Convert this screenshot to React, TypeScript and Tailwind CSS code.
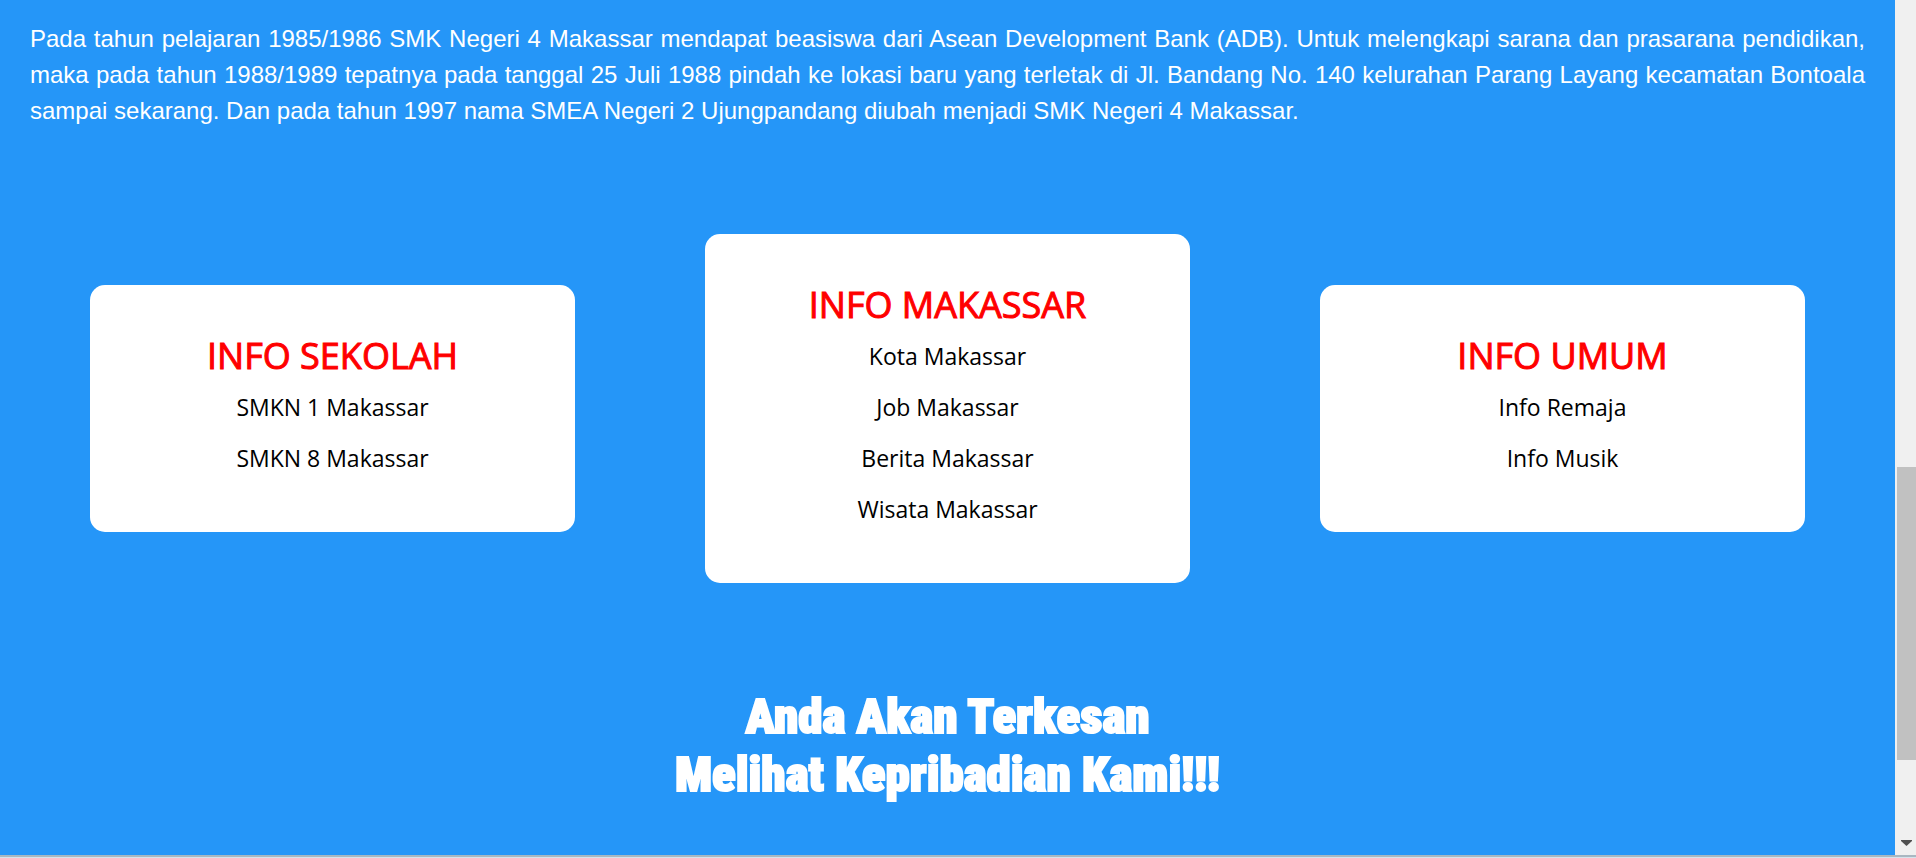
const cards = [
  { title: "INFO SEKOLAH", links: ["SMKN 1 Makassar", "SMKN 8 Makassar"] },
  { title: "INFO MAKASSAR", links: ["Kota Makassar", "Job Makassar", "Berita Makassar", "Wisata Makassar"] },
  { title: "INFO UMUM", links: ["Info Remaja", "Info Musik"] },
];

function InfoCard({ title, links }: { title: string; links: string[] }) {
  return (
    <section className="rounded-[15px] bg-white px-6 pt-[45px] pb-12 text-center">
      <h2 className="text-4xl/[52px] font-medium text-[#ff0000] [-webkit-text-stroke:1px_#ff0000]">{title}</h2>
      <ul>
        {links.map((link) => (
          <li key={link} className="text-[23px]/[51px] font-normal text-black">
            <a href="#">{link}</a>
          </li>
        ))}
      </ul>
    </section>
  );
}

function ScrollRail() {
  return (
    <div className="flex w-[21px] shrink-0 flex-col items-end bg-[#f0f0f0]" aria-hidden="true">
      <div className="grow-[467] basis-0" />
      <div className="w-[19px] grow-[293] basis-0 bg-[#c1c1c1]" />
      <div className="flex min-h-0 grow-[80] basis-[15px] flex-col items-center justify-end pr-1 pb-[9px]">
        <svg width="11" height="6" viewBox="0 0 11 6" fill="#505050">
          <path d="M0 0h11v1L5.500 6 0 1z" />
        </svg>
      </div>
    </div>
  );
}

export default function App() {
  return (
    <div className="flex min-h-screen flex-col bg-[#2596f8]">
      <div className="flex grow">
        <main className="min-w-0 grow font-['Open_Sans',sans-serif]">
          <p className="px-[30px] pt-[21px] text-justify font-['Liberation_Sans',Arial,sans-serif] text-2xl/9 text-white">
            Pada tahun pelajaran 1985/1986 SMK Negeri 4 Makassar mendapat beasiswa dari Asean Development Bank (ADB).
            Untuk melengkapi sarana dan prasarana pendidikan, maka pada tahun 1988/1989 tepatnya pada tanggal 25 Juli
            1988 pindah ke lokasi baru yang terletak di Jl. Bandang No. 140 kelurahan Parang Layang kecamatan Bontoala
            sampai sekarang. Dan pada tahun 1997 nama SMEA Negeri 2 Ujungpandang diubah menjadi SMK Negeri 4 Makassar.
          </p>
          <div className="mt-[105px] grid grid-cols-3 items-center gap-[130px] px-[90px]">
            {cards.map((card) => (
              <InfoCard key={card.title} {...card} />
            ))}
          </div>
          <h1 className="mt-[105px] text-center font-['Roboto_Condensed',Impact,sans-serif] text-[49px]/[58px] font-black text-white [-webkit-text-stroke:2px_white]">
            Anda Akan Terkesan
            <br />
            Melihat Kepribadian Kami!!!
          </h1>
        </main>
        <ScrollRail />
      </div>
      <div className="h-[3px] border-t-2 border-[#a9b7c1] bg-[#d5e3ec]" />
    </div>
  );
}
